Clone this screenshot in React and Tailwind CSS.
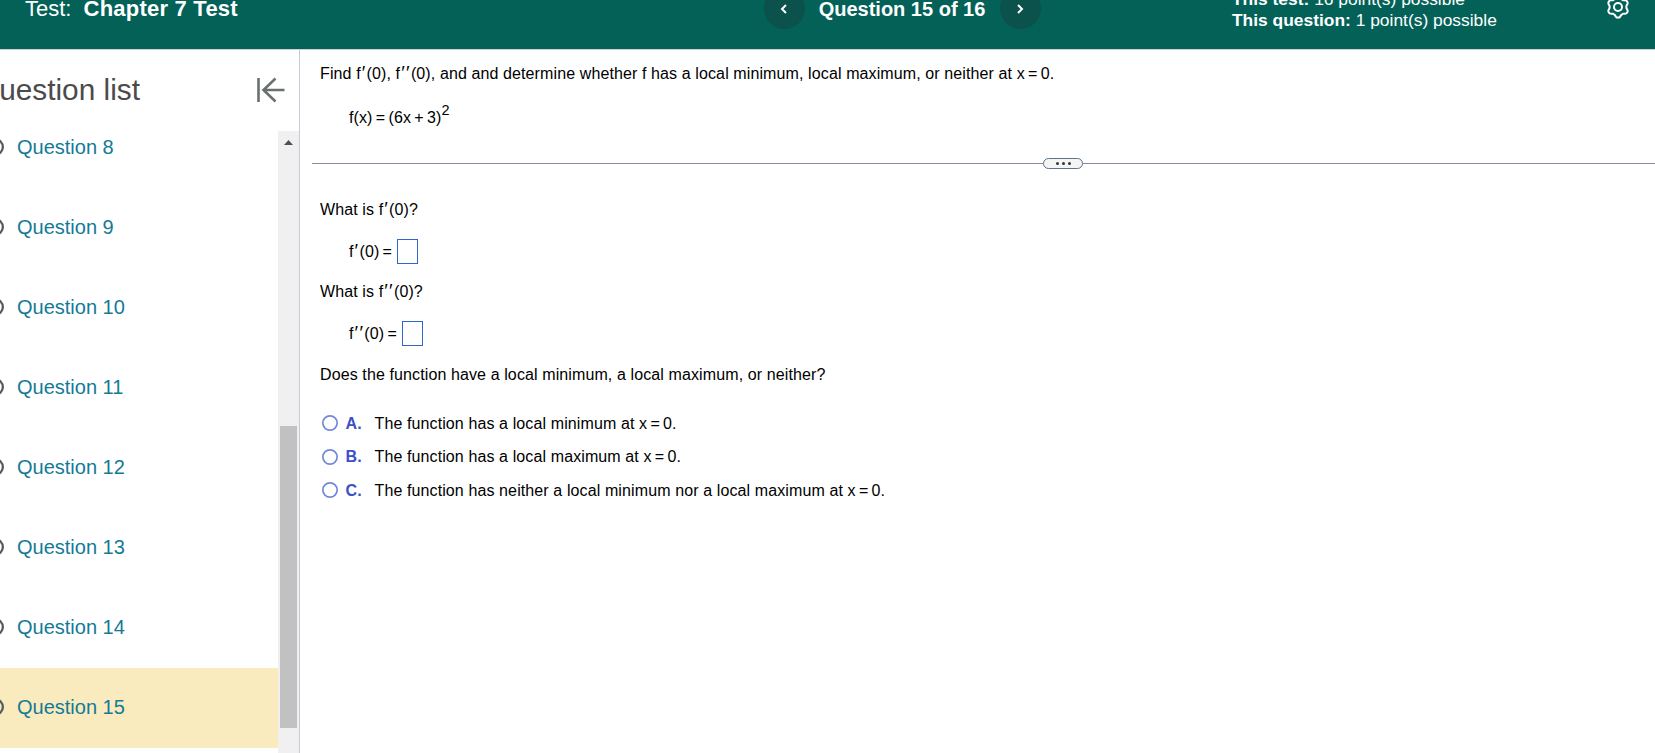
const QUESTIONS = [8, 9, 10, 11, 12, 13, 14, 15];
const CURRENT = 15;

const CHOICES = [
  { letter: "A", text: "The function has a local minimum at" },
  { letter: "B", text: "The function has a local maximum at" },
  { letter: "C", text: "The function has neither a local minimum nor a local maximum at" },
];

// Six-lobed gear outline
const GEAR_POINTS = Array.from({ length: 96 }, (_, i) => {
  const t = (i / 96) * Math.PI * 2;
  const r = 9.5 + 1.1 * Math.max(-1, Math.min(1, 1.3 * Math.cos(6 * t)));
  return `${(r * Math.sin(t)).toFixed(2)},${(r * Math.cos(t)).toFixed(2)}`;
}).join(" ");

function GearIcon() {
  return (
    <svg className="mb-1" width="24" height="24" viewBox="-12 -12 24 24" fill="none" stroke="white" strokeWidth="2">
      <polygon points={GEAR_POINTS} strokeLinejoin="round" />
      <circle r="4" />
    </svg>
  );
}

function NavButton({ d }) {
  return (
    <button className="flex size-[41px] shrink-0 items-center justify-center rounded-full bg-[#0b514c]">
      <svg width="10" height="12" viewBox="0 0 10 12" fill="none" stroke="white" strokeWidth="2">
        <path d={d} />
      </svg>
    </button>
  );
}

function Header() {
  return (
    <header className="h-[50px] shrink-0 overflow-hidden border-b border-[#c9d3d6] bg-[#036158] text-white">
      <div className="-mt-[31px] flex h-20 items-center whitespace-nowrap">
        <div className="w-[764px] pb-0.5 pl-[25px] text-[22px]">
          Test: <b className="ml-1.5 tracking-[0.22px]">Chapter 7 Test</b>
        </div>
        <div className="flex w-[468px] items-center pb-px">
          <NavButton d="M6 2 L2 6 L6 10" />
          <div className="w-[195px] pr-px text-center text-xl font-bold">Question 15 of 16</div>
          <NavButton d="M2 2 L6 6 L2 10" />
        </div>
        <div className="w-[374px] pt-px text-[17.4px] leading-[21px]">
          <div>
            <b>This test:</b> 16 point(s) possible
          </div>
          <div>
            <b>This question:</b> 1 point(s) possible
          </div>
        </div>
        <GearIcon />
      </div>
    </header>
  );
}

function Ring({ className, size, width }) {
  return (
    <svg className={className} width={size} height={size} fill="none" stroke="currentColor" strokeWidth={width}>
      <circle cx={size / 2} cy={size / 2} r={(size - width) / 2} />
    </svg>
  );
}

function Sidebar() {
  return (
    <aside className="flex w-[300px] shrink-0 flex-col border-r border-[#c7c9d6]">
      <div className="flex h-[81px] shrink-0 items-center justify-between pr-3.5">
        <h2 className="-ml-[24px] whitespace-nowrap text-[29.8px] text-[#4b4b4b]">Question list</h2>
        <svg className="mb-px" width="29" height="26" viewBox="0 0 29 26" fill="none" stroke="#6a7070" strokeWidth="2.6">
          <path d="M2.5 1 V25 M28.5 13 H7.5 M19.5 1.5 L7.5 13 L19.5 24.5" />
        </svg>
      </div>
      <div className="flex min-h-0 flex-1">
        <ul className="flex-1 overflow-hidden">
          {QUESTIONS.map((n) => (
            <li
              key={n}
              className={`flex h-20 items-center pb-0.5 first:-mt-[23px] ${n === CURRENT ? "bg-[#f9ebbd]" : ""}`}
            >
              <Ring className="-ml-3.5 mr-[13px] text-[#545b62]" size={18} width={2.3} />
              <a className="text-xl text-[#147a96]">Question {n}</a>
            </li>
          ))}
        </ul>
        {/* Scrollbar */}
        <div className="flex w-[21px] flex-col items-center bg-[#f0f0f0]">
          <svg className="mt-[9px]" width="9" height="5" viewBox="0 0 9 5">
            <path d="M0 5 L4.5 0 L9 5 Z" fill="#505050" />
          </svg>
          <div className="mt-[281px] h-[302px] w-[17px] bg-[#c1c1c1]" />
        </div>
      </div>
    </aside>
  );
}

function Derivative({ double }) {
  return (
    <span>
      f<span className="pl-px text-[19px] leading-[0] tracking-[1.3px]">{double ? "′′" : "′"}</span>(0)
    </span>
  );
}

function Formula({ children }) {
  return <span className="[word-spacing:-1.3px]">{children}</span>;
}

function AnswerRow({ double }) {
  return (
    <div className="mt-[19px] flex h-[25px] items-center gap-[5px] pl-[49px]">
      <span className="pt-px">
        <Formula>
          <Derivative double={double} /> =
        </Formula>
      </span>
      <span className="h-[25px] w-[21px] border border-[#2f66c9]" />
    </div>
  );
}

function Question() {
  return (
    <main className="min-w-0 flex-1 whitespace-nowrap text-base leading-5 tracking-[0.11px] text-black">
      <p className="mt-3.5 h-5 pl-5">
        Find <Derivative />, <Derivative double />, and and determine whether f has a local minimum,
        local maximum, or neither at <Formula>x = 0.</Formula>
      </p>
      <p className="mt-6 h-5 pl-[49px]">
        <Formula>f(x) = (6x + 3)</Formula>
        <span className="relative -top-2 text-[14.5px] leading-[0]">2</span>
      </p>

      {/* Divider with drag handle */}
      <div className="ml-3 mt-[30px] flex h-[11px] items-center">
        <div className="h-px w-[731px] bg-[#858c9c]" />
        <div className="flex h-[11px] w-10 items-center justify-center gap-[3px] rounded-full border border-[#5d7389] bg-[#f5f5f5]">
          <i className="size-[3px] rounded-full bg-[#333]" />
          <i className="size-[3px] rounded-full bg-[#333]" />
          <i className="size-[3px] rounded-full bg-[#333]" />
        </div>
        <div className="h-px flex-1 bg-[#858c9c]" />
      </div>

      <p className="mt-[31px] h-5 pl-5">
        What is <Derivative />?
      </p>
      <AnswerRow />
      <p className="mt-[18px] h-5 pl-5">
        What is <Derivative double />?
      </p>
      <AnswerRow double />
      <p className="mt-[19px] pl-5">
        Does the function have a local minimum, a local maximum, or neither?
      </p>

      <div className="mt-[22px] pl-[22px]">
        {CHOICES.map((c) => (
          <div key={c.letter} className="flex h-[33.5px] items-center">
            <Ring className="mb-px text-[#7288da]" size={16} width={1.7} />
            <b className="ml-[7.5px] w-[29px] text-[#3c50c8]">{c.letter}.</b>
            <span>
              {c.text} <Formula>x = 0.</Formula>
            </span>
          </div>
        ))}
      </div>
    </main>
  );
}

export default function App() {
  return (
    <div className="flex h-screen flex-col overflow-hidden bg-white font-['Liberation_Sans',Arial,sans-serif]">
      <Header />
      <div className="flex min-h-0 flex-1">
        <Sidebar />
        <Question />
      </div>
    </div>
  );
}
